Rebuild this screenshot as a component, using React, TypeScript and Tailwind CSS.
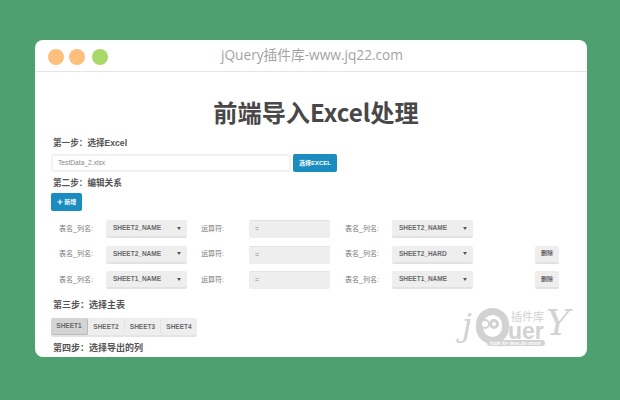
import { FaPlus } from "react-icons/fa";

const sans = "font-['Liberation_Sans','Noto_Sans_CJK_SC',sans-serif]";

const rows = [
  { left: "SHEET2_NAME", right: "SHEET2_NAME", removable: false },
  { left: "SHEET2_NAME", right: "SHEET2_HARD", removable: true },
  { left: "SHEET1_NAME", right: "SHEET1_NAME", removable: true },
];

function Caret() {
  return <span className="h-0 w-0 border-x-[2.5px] border-t-[3px] border-x-transparent border-t-[#555]" />;
}

function Select({ value }: { value: string }) {
  return (
    <div className="flex h-[18px] w-[81px] items-center justify-between rounded-[2px] border-b-2 border-[#e2e2e2] bg-[#eeeeee] pr-[6px] pl-[7px] text-[6.5px] font-bold text-[#6a6a6a]">
      <span>{value}</span>
      <Caret />
    </div>
  );
}

function Step({ children, className = "" }: { children: React.ReactNode; className?: string }) {
  return <p className={`ml-[2px] text-[8.6px] leading-[12px] font-bold text-[#555] ${className}`}>{children}</p>;
}

function Row({ left, right, removable }: { left: string; right: string; removable: boolean }) {
  return (
    <div className="flex h-[18px] items-center text-[7px] text-[#777]">
      <span className="w-[55px] pl-[8px]">表名_列名:</span>
      <Select value={left} />
      <span className="w-[62px] pl-[14px]">运算符:</span>
      <div className="flex h-[18px] w-[81px] items-center rounded-[2px] border-t border-[#e2e2e2] bg-[#eeeeee] pl-[6px] text-[7px] text-[#888]">=</div>
      <span className="w-[62px] pl-[15px]">表名_列名:</span>
      <Select value={right} />
      {removable && (
        <button className="ml-[62px] h-[18px] w-[24px] rounded-[2px] border-b-2 border-[#e2e2e2] bg-[#eeeeee] text-[6px] font-bold text-[#666]">删除</button>
      )}
    </div>
  );
}

// the jQuery logo in the corner, faint grey over the page
function Watermark() {
  return (
    <div className="absolute top-[234px] left-[414px] h-[42px] w-[130px] text-[#d2d2d2]">
      <span className="absolute top-[1px] left-[13px] font-['DejaVu_Serif',serif] text-[32px] leading-[36px] italic">j</span>
      <span className="absolute top-[2px] left-[27px] h-[36px] w-[33px] rounded-full border-[7px] border-[#d2d2d2] bg-white" />
      <span className="absolute top-[13px] left-[31px] h-[10px] w-[10px] rounded-full border-[2px] border-[#d2d2d2] bg-white" />
      <span className="absolute top-[13px] left-[40px] h-[10px] w-[10px] rounded-full border-[3px] border-[#d2d2d2] bg-white" />
      <span className="absolute top-[34px] left-[38px] h-[6px] w-[58px] rounded-[3px] bg-[#d2d2d2]" />
      <span className="absolute top-[17px] left-[59px] font-['Liberation_Sans',sans-serif] text-[23px] leading-[16px] font-bold">uer</span>
      <span className="absolute top-[4px] left-[62px] font-['Noto_Sans_CJK_SC',sans-serif] text-[11px] leading-[12px]">插件库</span>
      <span className="absolute top-[-1px] left-[97px] font-['DejaVu_Serif',serif] text-[36px] leading-[36px] italic">Y</span>
      <span className="absolute top-[34px] left-[41px] font-['Liberation_Sans',sans-serif] text-[5px] leading-[6px] font-bold whitespace-nowrap text-white italic">look for less,do more</span>
    </div>
  );
}

export default function App() {
  return (
    <div className={`h-[400px] w-[620px] bg-[#4fa070] pt-[40px] pl-[35px] ${sans}`}>
      <div className="relative h-[317px] w-[552px] overflow-hidden rounded-[8px] bg-white">
        <header className="relative flex h-[32px] items-center justify-center border-b border-[#e6e6e6]">
          <div className="absolute top-[9px] left-[13px] flex">
            <span className="h-4 w-4 rounded-full bg-[#fcbf7c]" />
            <span className="ml-[5px] h-4 w-4 rounded-full bg-[#fcbf7c]" />
            <span className="ml-[7px] h-4 w-4 rounded-full bg-[#a8d868]" />
          </div>
          <span className="pl-[2px] font-['Open_Sans','Noto_Sans_CJK_SC',sans-serif] text-[13.7px] text-[#a3a3a3]">jQuery插件库-www.jq22.com</span>
        </header>
        <main className="relative pr-[6px] pl-[16px]">
          <h1 className="pt-[24px] text-center font-['Noto_Sans_CJK_SC',sans-serif] text-[24.2px] leading-[32px] font-bold text-[#484848]">前端导入Excel处理</h1>
          <Step className="mt-[9px]">第一步：选择Excel</Step>
          <div className="mt-[5px] flex gap-[2px]">
            <div className="flex h-[18px] w-[240px] items-center rounded-[3px] border-2 border-[#f2f2f2] pl-[5px] text-[6.7px] text-[#888]">TestData_2.xlsx</div>
            <button className="h-[18px] w-[44px] rounded-[2px] bg-[#1a8cbf] text-[6px] font-bold text-white">选择EXCEL</button>
          </div>
          <Step className="mt-[5px]">第二步：编辑关系</Step>
          <button className="mt-[4px] flex h-[18px] w-[31px] items-center justify-center gap-[1.5px] rounded-[2px] bg-[#1a8cbf] text-[6px] font-bold text-white">
            <FaPlus className="h-[6px] w-[6px]" />新增
          </button>
          <div className="mt-[9px] flex flex-col gap-[7.5px]">
            {rows.map((row, i) => (
              <Row key={i} {...row} />
            ))}
          </div>
          <Step className="mt-[10px] text-[9px]">第三步：选择主表</Step>
          <div className="mt-[7px] flex h-[19px] w-[146px] rounded-[2px] border-b-2 border-[#e4e4e4] bg-[#eeeeee] text-[6.5px] font-bold text-[#6a6a6a]">
            <span className="flex w-[37px] items-center justify-center rounded-[2px] border-r border-b border-[#bbbbbb] bg-[#d4d4d4]">SHEET1</span>
            <span className="flex w-[37px] items-center justify-center border-r border-[#e4e4e4]">SHEET2</span>
            <span className="flex w-[36px] items-center justify-center border-r border-[#e4e4e4]">SHEET3</span>
            <span className="flex w-[36px] items-center justify-center">SHEET4</span>
          </div>
          <Step className="mt-[5px] text-[9px]">第四步：选择导出的列</Step>
          <Watermark />
        </main>
      </div>
    </div>
  );
}
